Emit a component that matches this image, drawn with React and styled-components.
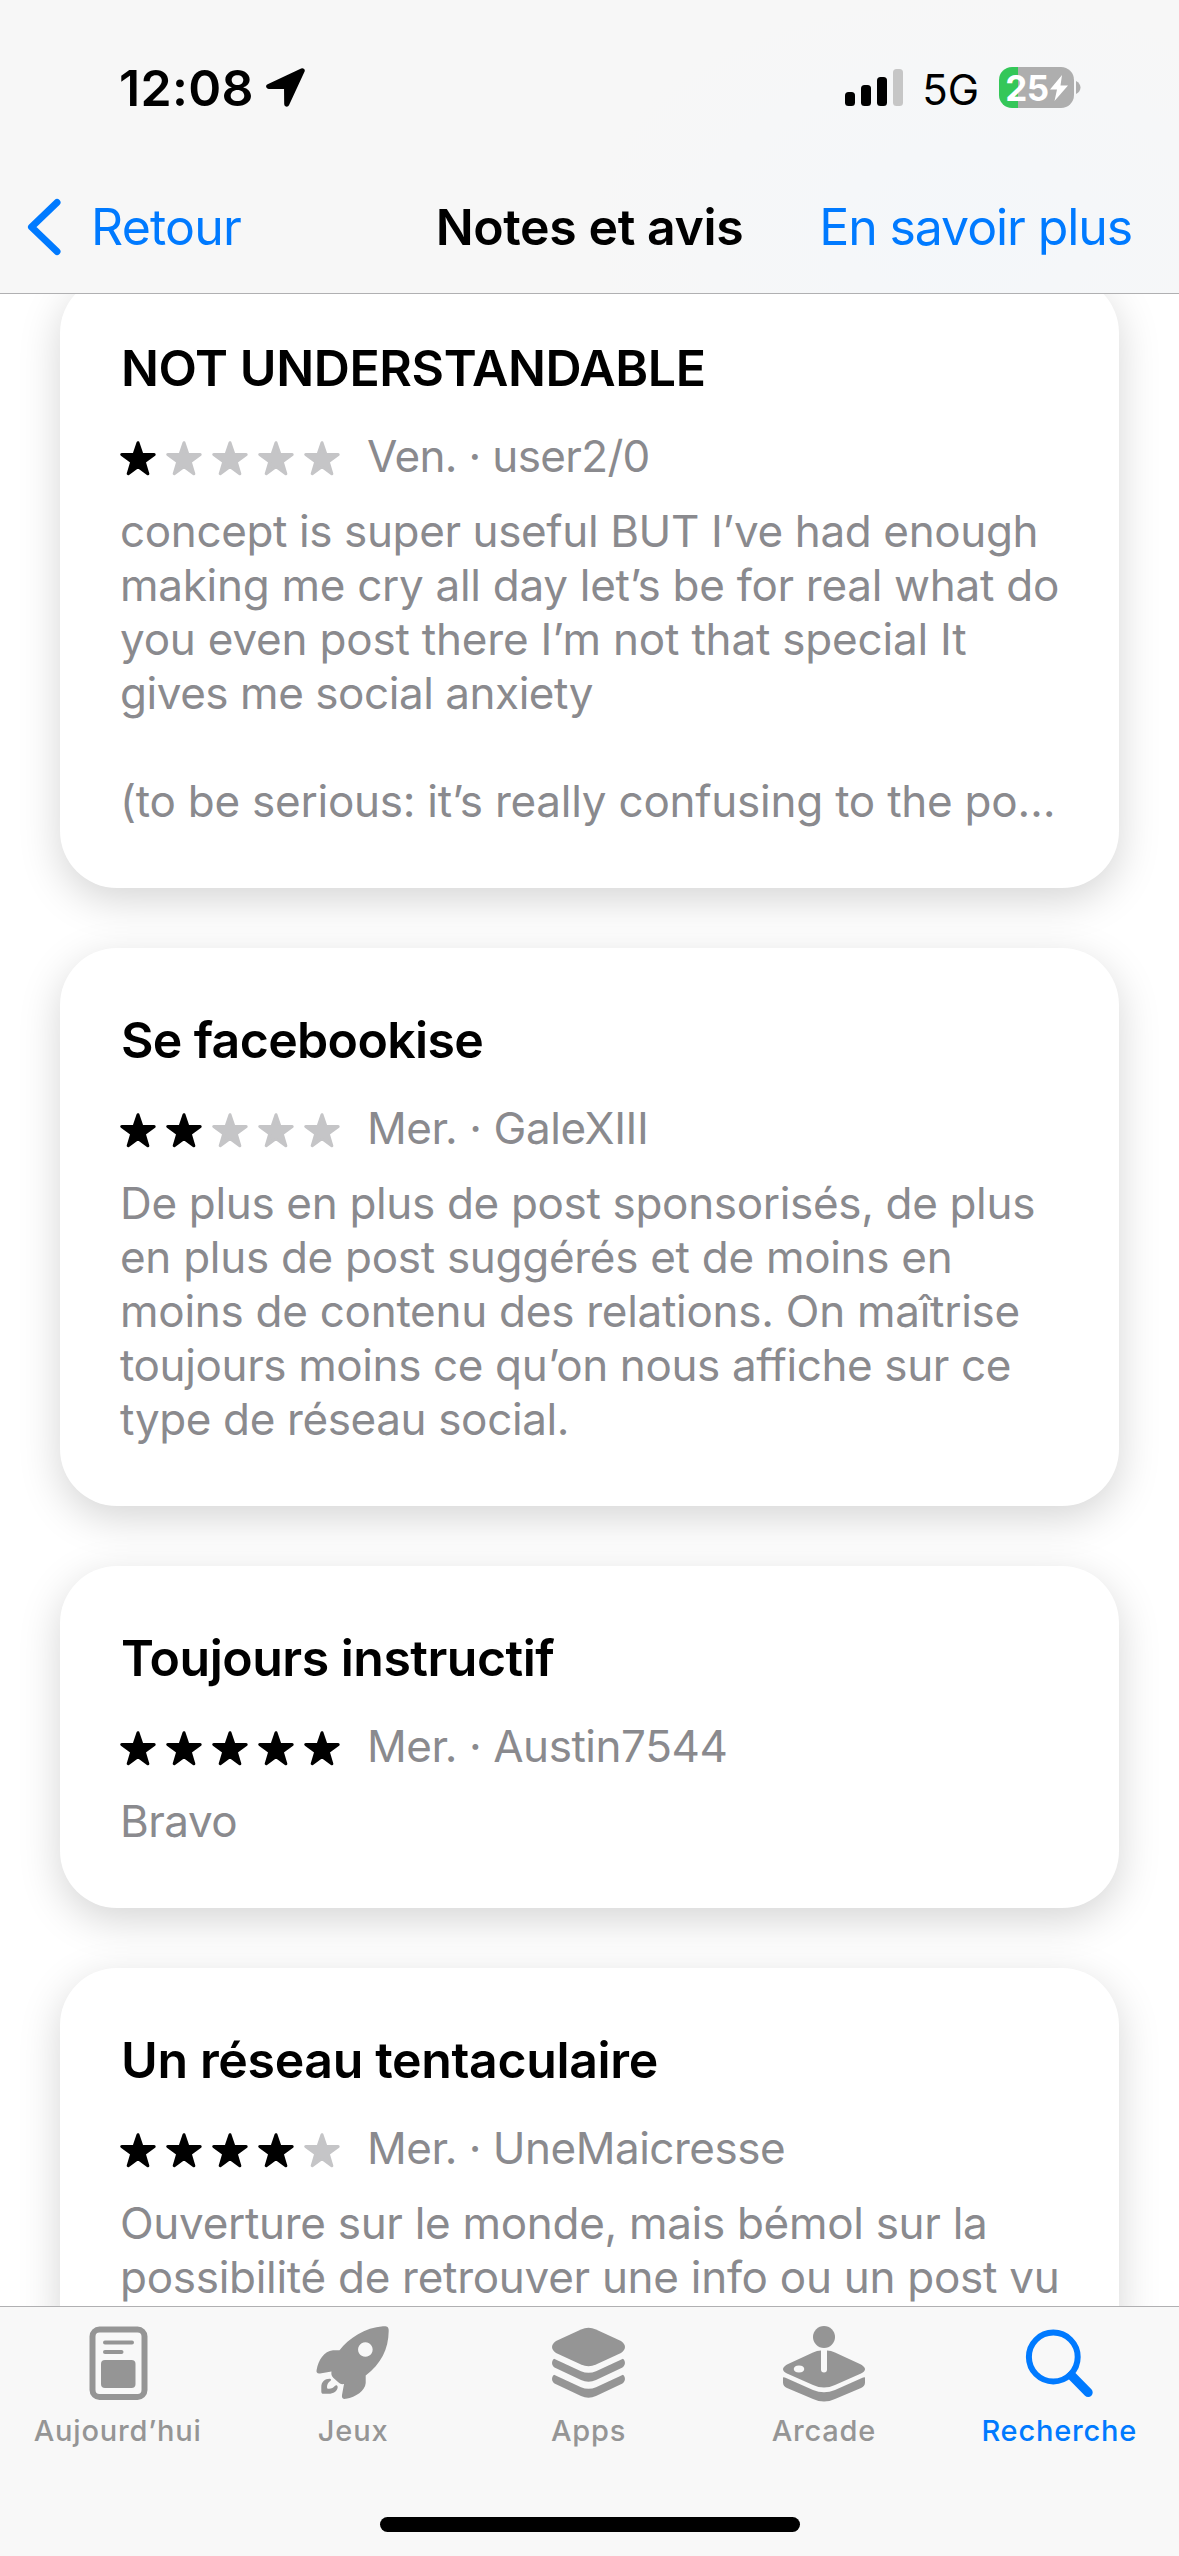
import styled, { createGlobalStyle } from "styled-components";

const GlobalStyle = createGlobalStyle`
  * {
    box-sizing: border-box;
  }

  body {
    margin: 0;
    background: #fff;
    font-family: Inter, "Liberation Sans", sans-serif;
    -webkit-font-smoothing: antialiased;
  }

  h1, h2, p {
    margin: 0;
  }
`;

const Screen = styled.div`
  display: flex;
  flex-direction: column;
  width: 1179px;
  height: 2556px;
  overflow: hidden;
  background: #fff;
`;

const Header = styled.header`
  flex: none;
  height: 294px;
  border-bottom: 1px solid #b0b0b2;
  background: radial-gradient(
      ellipse 380px 240px at 960px 230px,
      #f4f7fa,
      rgba(244, 247, 250, 0)
    ),
    #f7f7f7;
`;

const StatusBar = styled.div`
  display: flex;
  align-items: center;
  height: 175px;
  padding: 0 98px 0 119px;
`;

const Time = styled.span`
  font-size: 50px;
  font-weight: 600;
  line-height: 60px;
  letter-spacing: 0.3px;
`;

const LocationIcon = styled.svg`
  width: 39px;
  height: 39px;
  margin-left: 12px;
`;

const StatusRight = styled.div`
  display: flex;
  align-items: center;
  margin-left: auto;
`;

const SignalIcon = styled.svg`
  width: 58px;
  height: 37px;
`;

const Network = styled.span`
  margin-left: 19px;
  padding-top: 4px;
  font-size: 42px;
  line-height: 50px;
`;

const Battery = styled.div`
  display: flex;
  align-items: center;
  justify-content: center;
  width: 75px;
  height: 41px;
  margin-left: 20px;
  border-radius: 13px;
  background: linear-gradient(90deg, #34c759 25%, #aeaeae 25%);
  color: #fff;
  font-size: 35px;
  font-weight: 700;
  letter-spacing: -0.5px;
`;

const BoltIcon = styled.svg`
  width: 18px;
  height: 26px;
  margin-left: 1px;
`;

const BatteryCap = styled.svg`
  width: 5px;
  height: 13px;
  margin-left: 2px;
`;

const NavBar = styled.nav`
  display: grid;
  grid-template-columns: 1fr auto 1fr;
  align-items: center;
  height: 104px;
  padding: 0 27px;
  font-size: 50px;
  line-height: 60px;
`;

const NavLink = styled.a`
  display: flex;
  align-items: center;
  justify-self: ${({ $end }) => ($end ? "end" : "start")};
  margin-right: ${({ $end }) => ($end ? "20px" : "0")};
  color: #007aff;
  letter-spacing: ${({ $end }) => ($end ? "-1.1px" : "-0.8px")};
  white-space: nowrap;
`;

const ChevronIcon = styled.svg`
  width: 36px;
  height: 58px;
  margin-right: 28px;
`;

const NavTitle = styled.h1`
  font-size: 50px;
  font-weight: 600;
  letter-spacing: -0.4px;
`;

const ReviewList = styled.main`
  display: flex;
  flex: 1;
  flex-direction: column;
  gap: 60px;
  min-height: 0;
  padding: 0 60px;
  overflow: hidden;
`;

const Card = styled.article`
  flex: none;
  padding: 62px 50px 60px 60px;
  border-radius: 57px;
  background: #fff;
  box-shadow: 0 12px 42px rgba(0, 0, 0, 0.17);

  &:first-child {
    margin-top: -18px;
  }
`;

const ReviewTitle = styled.h2`
  padding-left: 1px;
  font-size: 50px;
  font-weight: 600;
  line-height: 61px;
  letter-spacing: ${({ $tracking }) => $tracking}px;
`;

const Meta = styled.div`
  display: flex;
  align-items: center;
  height: 54px;
  margin-top: 30px;
  color: #8a8a8e;
  font-size: 44px;
  line-height: 54px;
  letter-spacing: ${({ $tracking }) => $tracking}px;
`;

const Stars = styled.div`
  display: flex;
  gap: 10px;
  margin-right: 27px;
  padding-top: 5px;
`;

const StarIcon = styled.svg`
  width: 36px;
  height: 35px;
  fill: currentColor;
  stroke: currentColor;
  stroke-width: 3;
  stroke-linejoin: round;
  color: ${({ $filled }) => ($filled ? "#000" : "#c5c5c7")};
`;

const Body = styled.div`
  margin-top: 21px;
  color: #8a8a8e;
  font-size: 44px;
  line-height: 54px;
`;

const Line = styled.p`
  height: 54px;
  letter-spacing: ${({ $tracking }) => $tracking}px;
  white-space: nowrap;
`;

const TabBar = styled.footer`
  flex: none;
  display: flex;
  flex-direction: column;
  height: 250px;
  border-top: 1px solid #b0b0b2;
  background: #f8f8f8;
`;

const Tabs = styled.div`
  display: grid;
  grid-template-columns: repeat(5, 1fr);
  padding-right: 2px;
`;

const Tab = styled.a`
  display: flex;
  flex-direction: column;
  align-items: center;
  padding-top: 14px;
  color: ${({ $active }) => ($active ? "#007aff" : "#959595")};
  font-size: 29px;
  font-weight: 500;
  line-height: 36px;
  letter-spacing: 0.8px;

  svg {
    width: 84px;
    height: 84px;
    margin-bottom: 8px;
  }
`;

const HomeIndicator = styled.div`
  align-self: center;
  width: 420px;
  height: 15px;
  margin-top: 68px;
  border-radius: 8px;
  background: #000;
`;

// each line is [text, letter-spacing in px]
const reviews = [
  {
    title: "NOT UNDERSTANDABLE",
    titleTracking: -0.4,
    stars: 1,
    day: "Ven.",
    author: "user2/0",
    metaTracking: -0.65,
    lines: [
      ["concept is super useful BUT I’ve had enough", -0.38],
      ["making me cry all day let’s be for real what do", -0.28],
      ["you even post there I’m not that special It", -0.2],
      ["gives me social anxiety", -0.45],
      ["", 0],
      ["(to be serious: it’s really confusing to the po…", -0.24],
    ],
  },
  {
    title: "Se facebookise",
    titleTracking: -0.65,
    stars: 2,
    day: "Mer.",
    author: "GaleXIII",
    metaTracking: -0.4,
    lines: [
      ["De plus en plus de post sponsorisés, de plus", -0.33],
      ["en plus de post suggérés et de moins en", -0.29],
      ["moins de contenu des relations. On maîtrise", -0.27],
      ["toujours moins ce qu’on nous affiche sur ce", -0.38],
      ["type de réseau social.", -0.37],
    ],
  },
  {
    title: "Toujours instructif",
    titleTracking: -0.5,
    stars: 5,
    day: "Mer.",
    author: "Austin7544",
    metaTracking: -0.45,
    lines: [["Bravo", -0.5]],
  },
  {
    title: "Un réseau tentaculaire",
    titleTracking: -0.35,
    stars: 4,
    day: "Mer.",
    author: "UneMaicresse",
    metaTracking: -0.5,
    lines: [
      ["Ouverture sur le monde, mais bémol sur la", -0.3],
      ["possibilité de retrouver une info ou un post vu", -0.28],
    ],
  },
];

function Star({ filled }) {
  return (
    <StarIcon viewBox="0 0 36 35" $filled={filled}>
      <path d="M18 1.700L21.900 13.300L34.200 13.500L24.300 20.900L27.800 32.700L18 25.600L8.200 32.700L11.700 20.900L1.800 13.500L14.100 13.300Z" />
    </StarIcon>
  );
}

function Review({ title, titleTracking, stars, day, author, metaTracking, lines }) {
  return (
    <Card>
      <ReviewTitle $tracking={titleTracking}>{title}</ReviewTitle>
      <Meta $tracking={metaTracking}>
        <Stars>
          {[1, 2, 3, 4, 5].map((n) => (
            <Star key={n} filled={n <= stars} />
          ))}
        </Stars>
        {day} · {author}
      </Meta>
      <Body>
        {lines.map(([text, tracking], index) => (
          <Line key={index} $tracking={tracking}>
            {text}
          </Line>
        ))}
      </Body>
    </Card>
  );
}

function TodayIcon() {
  return (
    <svg viewBox="0 0 84 84" fill="currentColor">
      <rect x="16.500" y="8.500" width="52" height="67.500" rx="7" fill="none" stroke="currentColor" strokeWidth="6" />
      <rect x="27" y="19.500" width="31" height="4" rx="2" />
      <rect x="27" y="29" width="20.500" height="4" rx="2" />
      <rect x="25" y="39" width="34.500" height="28" rx="4" />
    </svg>
  );
}

function GamesIcon() {
  return (
    <svg viewBox="0 0 84 84" fill="currentColor">
      <path
        fillRule="evenodd"
        d="M72 5.200C76 4.800 78 6 77.700 10C77.500 28 70 43 54.700 54.500V62C54 70 45 76 35 77.800C32 78.300 30.500 77 31 74L33 63C30 63.500 28.500 62.500 27 61L22.500 57C20.500 55 20 53 20.500 50.500L9 52.500C6.500 53 5 51.500 5.600 49C7.500 39 13 30 22 29.200H28.500C38 17 54 6.500 72 5.200zM54.300 21.200a7.300 7.300 0 1 0 .1 0z"
      />
      <path d="M19.500 57.900C14 57.500 10.300 61 10.300 66V70.500C10.300 72 11 72.800 12.500 72.800H17.500C22.500 72.800 26.500 70 26.700 66C26.500 64 25 63.800 23.800 65C22.500 67 19 68.300 16.300 67.500C15.500 64.500 17 61.500 19 60.200C20.300 59.200 20.500 58.300 19.500 57.900z" />
    </svg>
  );
}

function AppsIcon() {
  return (
    <svg viewBox="0 0 84 84" fill="currentColor">
      <path d="M35 8.500q7.500-3.300 15 0l25 11.500q8 6 0 12l-25 11.500q-7.500 3.300-15 0l-25-11.500q-8-6 0-12z" />
      <path d="M8 37.800l27 12.500q7.500 3 15 0l27-12.500c3 2.500 2.500 7-1 9L50 59q-7.500 3.300-15 0L9 46.800c-3.500-2-4-6.500-1-9z" />
      <path d="M8 53.800l27 12.500q7.500 3 15 0l27-12.500c3 2.500 2.500 7-1 9L50 75q-7.500 3.300-15 0L9 62.800c-3.500-2-4-6.500-1-9z" />
    </svg>
  );
}

function ArcadeIcon() {
  return (
    <svg viewBox="0 0 84 84" fill="currentColor">
      <circle cx="42" cy="16" r="11" />
      <path
        fillRule="evenodd"
        d="M39 29.500v19a3 3 0 0 0 6 0v-19q4 0 8 2l26 12q8 5 0 9L53 64q-11 5-22 0L5 52.500q-8-4 0-9l26-12q4-2 8-2zM17 44.500c-7 0-7 7 0 7s7-7 0-7z"
      />
      <path d="M1 56.500q.8-.6 2.500.2L31 69q11 4.500 22 0l27.500-12.300q1.700-.8 2.500-.2v5q0 3.500-4 5.500L53 78q-11 5-22 0L5 67q-4-2-4-5.500z" />
    </svg>
  );
}

function SearchIcon() {
  return (
    <svg viewBox="0 0 84 84" fill="none" stroke="currentColor">
      <circle cx="36.300" cy="36" r="24.400" strokeWidth="6" />
      <path d="M54.500 54.500l16.700 17" strokeWidth="9" strokeLinecap="round" />
    </svg>
  );
}

const tabs = [
  { label: "Aujourd’hui", Icon: TodayIcon },
  { label: "Jeux", Icon: GamesIcon },
  { label: "Apps", Icon: AppsIcon },
  { label: "Arcade", Icon: ArcadeIcon },
  { label: "Recherche", Icon: SearchIcon, active: true },
];

export default function App() {
  return (
    <>
      <GlobalStyle />
      <Screen>
        <Header>
          <StatusBar>
            <Time>12:08</Time>
            <LocationIcon viewBox="0 0 39 39" stroke="#000" strokeWidth="5" strokeLinejoin="round">
              <path d="M36.200 2.700L2.700 18.500H20.500L20.700 36.200Z" />
            </LocationIcon>
            <StatusRight>
              <SignalIcon viewBox="0 0 58 37">
                <rect x="0" y="23" width="10" height="14" rx="3.500" />
                <rect x="16" y="16" width="10" height="21" rx="3.500" />
                <rect x="32" y="8" width="10" height="29" rx="3.500" />
                <rect x="48" y="0" width="10" height="37" rx="3.500" fill="#c6c6c6" />
              </SignalIcon>
              <Network>5G</Network>
              <Battery>
                25
                <BoltIcon viewBox="0 0 18 26" fill="#fff">
                  <path d="M12 0L0 14.500h7L4.500 26L18 10.500h-7.500z" />
                </BoltIcon>
              </Battery>
              <BatteryCap viewBox="0 0 5 13" fill="#aeaeae">
                <path d="M0 0c6 3 6 10 0 13z" />
              </BatteryCap>
            </StatusRight>
          </StatusBar>
          <NavBar>
            <NavLink>
              <ChevronIcon viewBox="0 0 36 58" fill="none" stroke="currentColor" strokeWidth="7">
                <path d="M30 4.500L4.500 29l25.500 24.500" strokeLinecap="round" strokeLinejoin="round" />
              </ChevronIcon>
              Retour
            </NavLink>
            <NavTitle>Notes et avis</NavTitle>
            <NavLink $end>En savoir plus</NavLink>
          </NavBar>
        </Header>
        <ReviewList>
          {reviews.map((review) => (
            <Review key={review.title} {...review} />
          ))}
        </ReviewList>
        <TabBar>
          <Tabs>
            {tabs.map(({ label, Icon, active }) => (
              <Tab key={label} $active={active}>
                <Icon />
                {label}
              </Tab>
            ))}
          </Tabs>
          <HomeIndicator />
        </TabBar>
      </Screen>
    </>
  );
}
